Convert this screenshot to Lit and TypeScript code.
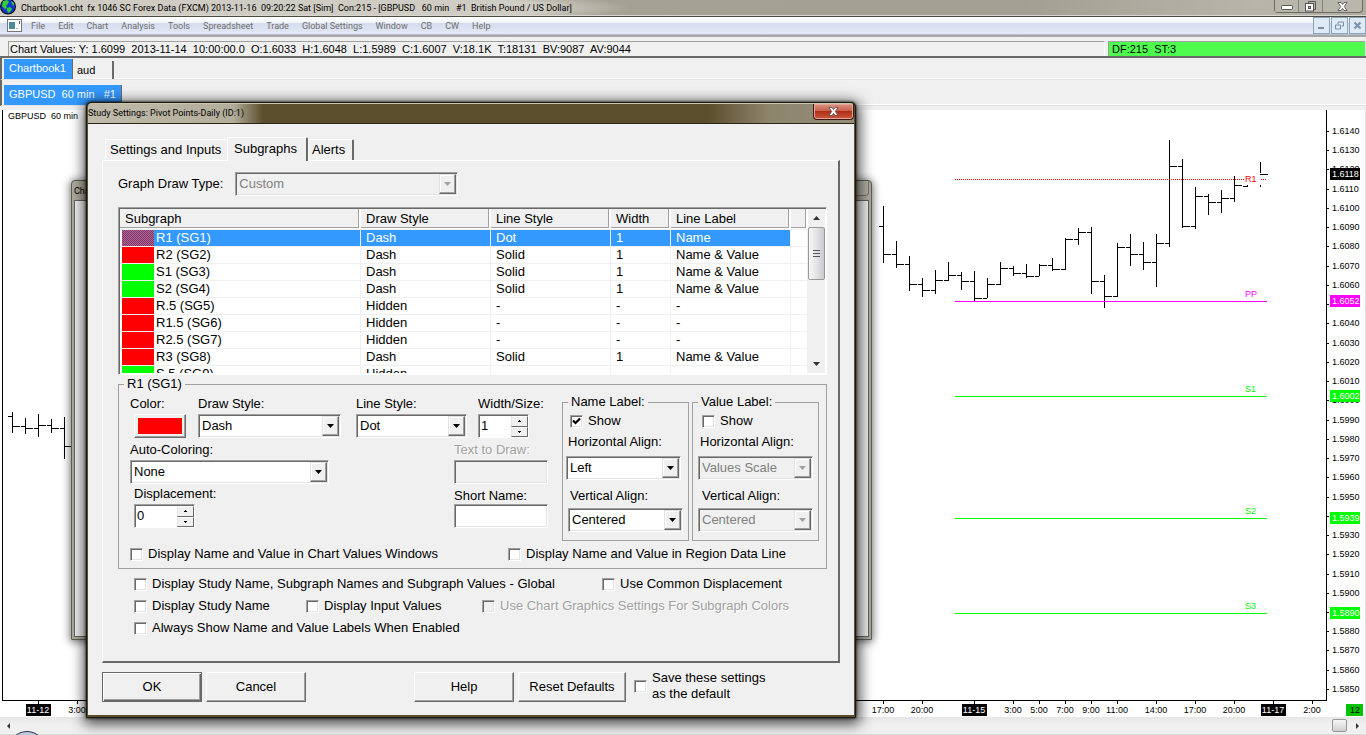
import { LitElement, html, svg, css } from "lit";
import { customElement } from "lit/decorators.js";
import { classMap } from "lit/directives/class-map.js";

const MENUS = ["File", "Edit", "Chart", "Analysis", "Tools", "Spreadsheet", "Trade", "Global Settings", "Window", "CB", "CW", "Help"];

type Bar = [x: number, high: number, low: number, open: number | null, close: number | null];

const EARLY_BARS: Bar[] = [
  [12, 412, 433, 416, 426], [25, 418, 434, 426, 428], [38, 414, 437, 428, 425],
  [51, 419, 433, 425, 428], [64, 417, 459, 428, 446],
];

const LATE_BARS: Bar[] = ([
  [206, 263, 254], [241, 268, 264], [256, 291, 284], [278, 297, 290], [270, 294, 280],
  [262, 281, 275], [272, 290, 281], [271, 301, 298], [278, 298, 284], [262, 285, 268],
  [266, 276, 273], [264, 278, 276], [264, 276, 265], [258, 271, 269], [238, 270, 239],
  [228, 245, 232], [227, 294, 281], [275, 308, 296], [243, 297, 247], [234, 266, 254],
  [242, 270, 262], [234, 287, 243], [140, 247, 166], [159, 228, 226], [187, 229, 196],
  [194, 215, 202], [190, 213, 198], [176, 202, 185],
] as number[][]).map((b, i, all) => [883 + 13 * i, b[0], b[1], i ? all[i - 1][2] : 226, b[2]] as Bar);

const LAST_BARS: Bar[] = [
  [1247, 185, 187, 186, null], [1260, 162, 173, null, 174], [1260, 185, 187, null, null],
];

const LEVELS = [
  { name: "PP", y: 301, color: "#f0f" },
  { name: "S1", y: 396, color: "#0f0" },
  { name: "S2", y: 518, color: "#0f0" },
  { name: "S3", y: 613, color: "#0f0" },
];

const PRICE_TAGS = [
  { text: "1.6118", y: 174, color: "#000" },
  { text: "1.6052", y: 301, color: "#f0f" },
  { text: "1.6002", y: 396, color: "#0f0" },
  { text: "1.5939", y: 518, color: "#0f0" },
  { text: "1.5890", y: 613, color: "#0f0" },
];

/* Scale labels that a price tag covers completely. */
const COVERED = ["1.5940", "1.5890"];

const TIMES: [number, string, boolean?][] = [
  [38, "11-12", true], [77, "3:00"], [883, "17:00"], [922, "20:00"], [974, "11-15", true],
  [1013, "3:00"], [1039, "5:00"], [1065, "7:00"], [1091, "9:00"], [1117, "11:00"],
  [1156, "14:00"], [1195, "17:00"], [1234, "20:00"], [1273, "11-17", true], [1312, "2:00"],
];

const ROWS = [
  ["R1 (SG1)", "red", "Dash", "Dot", "1", "Name"],
  ["R2 (SG2)", "red", "Dash", "Solid", "1", "Name & Value"],
  ["S1 (SG3)", "green", "Dash", "Solid", "1", "Name & Value"],
  ["S2 (SG4)", "green", "Dash", "Solid", "1", "Name & Value"],
  ["R.5 (SG5)", "red", "Hidden", "-", "-", "-"],
  ["R1.5 (SG6)", "red", "Hidden", "-", "-", "-"],
  ["R2.5 (SG7)", "red", "Hidden", "-", "-", "-"],
  ["R3 (SG8)", "red", "Dash", "Solid", "1", "Name & Value"],
  ["S.5 (SG9)", "green", "Hidden", "-", "-", "-"],
];

@customElement("price-chart")
export class PriceChart extends LitElement {
  static styles = css`
    :host { display: flex; min-height: 0; background: #fff; font: 9px "Liberation Sans", Arial, sans-serif; }
    .plot { flex: 1; min-width: 0; height: 100%; display: block; overflow: hidden; }
    .axis { flex: none; width: 39px; height: 100%; display: block; border-right: 1px solid #e3e3e3; }
    .ink { stroke: #000; stroke-width: 1; shape-rendering: crispEdges; }
    .mid { text-anchor: middle; }
    .inverse { fill: #fff; }
  `;

  private bar([x, high, low, open, close]: Bar) {
    return svg`
      <line class="ink" x1=${x + 0.5} x2=${x + 0.5} y1=${high} y2=${low}></line>
      ${open === null ? null : svg`<line class="ink" x1=${x - 4} x2=${x} y1=${open + 0.5} y2=${open + 0.5}></line>`}
      ${close === null ? null : svg`<line class="ink" x1=${x} x2=${x + 8} y1=${close + 0.5} y2=${close + 0.5}></line>`}`;
  }

  render() {
    const prices = Array.from({ length: 30 }, (_, i) => ({
      text: (1.614 - i * 0.001).toFixed(4),
      y: Math.round(131 + i * 19.24),
    }));
    return html`
      <svg class="plot" role="img" aria-label="GBPUSD 60 min">
        <g transform="translate(0,-110)">
          <line class="ink" x1="2.5" x2="2.5" y1="110" y2="700"></line>
          <line class="ink" x1="2" x2="3000" y1="700.5" y2="700.5"></line>
          <text x="8" y="119" xml:space="preserve">GBPUSD  60 min</text>
          ${EARLY_BARS.map((b) => this.bar(b))}
          ${LATE_BARS.map((b) => this.bar(b))}
          ${LAST_BARS.map((b) => this.bar(b))}
          <line x1="955" x2="1244" y1="179.5" y2="179.5" stroke="red" stroke-dasharray="1 1"></line>
          <line x1="1261" x2="1267" y1="179.5" y2="179.5" stroke="red" stroke-dasharray="1 1"></line>
          <text x="1245" y="182" fill="red">R1</text>
          ${LEVELS.map((l) => svg`
            <line x1="955" x2="1267" y1=${l.y + 0.5} y2=${l.y + 0.5} stroke=${l.color}></line>
            <text x="1245" y=${l.y - 4} fill=${l.color}>${l.name}</text>`)}
          ${TIMES.map(([x, t, tag]) => svg`
            <line class="ink" x1=${x + 0.5} x2=${x + 0.5} y1="700" y2="704"></line>
            ${tag ? svg`<rect x=${x - 12} y="704" width="25" height="12"></rect>` : null}
            <text class=${tag ? "mid inverse" : "mid"} x=${x} y="713">${t}</text>`)}
        </g>
      </svg>
      <svg class="axis" aria-label="Price scale" role="img">
        <g transform="translate(-1326,-110)">
          <line class="ink" x1="1326.5" x2="1326.5" y1="110" y2="701"></line>
          ${prices.map((p) => svg`
            <line class="ink" x1="1327" x2="1329" y1=${p.y + 0.5} y2=${p.y + 0.5}></line>
            ${COVERED.includes(p.text) ? null : svg`<text x="1332" y=${p.y + 3}>${p.text}</text>`}`)}
          ${PRICE_TAGS.map((p) => svg`
            <rect x="1330" y=${p.y - 6} width="30" height="12" fill=${p.color}></rect>
            <text class="inverse" x="1332" y=${p.y + 3}>${p.text}</text>`)}
          <rect x="1346" y="704" width="17" height="12" fill="#00c400"></rect>
          <text class="mid" x="1355" y="713">12</text>
        </g>
      </svg>`;
  }
}

@customElement("study-dialog")
export class StudyDialog extends LitElement {
  static styles = css`
    :host { display: block; font: 13px/16px "Liberation Sans", Arial, sans-serif; color: #000; }
    * { box-sizing: border-box; }
    button, input, select { font: inherit; color: inherit; margin: 0; border-radius: 0; outline: 0; }
    .frame { border: 1px solid #1c1a14; border-radius: 5px 5px 1px 1px; background: #5b4e2d; padding: 0 1px 2px; box-shadow: 0 0 3px #000, 1px 3px 14px 3px rgba(0, 0, 0, .7); }
    .title { height: 20px; display: flex; justify-content: space-between; align-items: flex-start; border-top: 1px solid #c9c2ad; border-radius: 4px 4px 0 0; background: linear-gradient(90deg, #bfbaa9 0, #b3ad9b 145px, #5b4e2d 175px, #5b4e2d 620px, #8d846c 680px, #958d7a); font: 9px/18px Roboto, sans-serif; }
    .title h1 { font: inherit; margin: 0; }
    .close { width: 41px; height: 16px; padding: 0; border: 1px solid #3d1712; border-top: 0; border-radius: 0 0 4px 4px; background: linear-gradient(#d99684, #c9614c 45%, #b32c16 50%, #c85a3f); box-shadow: inset 0 0 0 1px #e3a595; display: grid; place-items: center; }
    .client { background: #f0f0f0; border-top: 1px solid #2b2516; padding: 12px 14px 13px; }

    .tabs { display: flex; align-items: flex-end; height: 24px; padding-left: 3px; }
    .tab { border: 0; background: none; border-left: 1px solid #fff; border-top: 1px solid #fff; border-right: 1px solid #696969; border-radius: 2px 2px 0 0; height: 21px; padding: 0 4px; white-space: nowrap; text-align: left; }
    .wide { width: 122px; border-right: 0; }
    .active { width: 81px; height: 24px; padding: 0 6px 2px; border-right-width: 2px; background: #f0f0f0; position: relative; top: 1px; }
    .last { width: 46px; border-right-width: 2px; padding: 0 3px; }

    .panel { border: 1px solid #fff; border-right: 2px solid #696969; border-bottom: 2px solid #696969; height: 503px; padding: 11px 11px 0 15px; }
    .line { display: flex; }
    .mode { align-items: center; gap: 12px; }

    .sel { display: grid; height: 24px; border: 1px solid; border-color: #a0a0a0 #fff #fff #a0a0a0; box-shadow: inset 1px 1px #696969, inset -1px -1px #e3e3e3; background: #fff; padding: 1px; }
    .sel select, .sel .arrow { grid-area: 1 / 1; }
    .sel select { appearance: none; border: 0; background: none; padding: 0 0 0 2px; width: 100%; height: 20px; }
    .arrow { justify-self: end; width: 17px; height: 20px; pointer-events: none; background: #f0f0f0; border: 1px solid; border-color: #e3e3e3 #696969 #696969 #e3e3e3; box-shadow: inset -1px -1px #a0a0a0, inset 1px 1px #fff; display: grid; place-items: center; }
    .dim { background: #f0f0f0; color: #808080; }
    .dim select { color: #808080; opacity: 1; }
    .w222 { width: 223px; } .w142 { width: 143px; } .w110 { width: 111px; } .w199 { width: 199px; } .w114 { width: 115px; }

    .list { margin-top: 11px; height: 168px; display: flex; border: 1px solid; border-color: #a0a0a0 #fff #fff #a0a0a0; box-shadow: inset 1px 1px #696969; background: #fff; padding: 1px 1px 1px 1px; }
    .rows { flex: 1; overflow: hidden; min-width: 0; }
    table { border-collapse: separate; border-spacing: 0; table-layout: fixed; width: 100%; }
    th { padding: 0 2px 1px 0; text-align: left; font-weight: normal; border-bottom: 1px solid #f0f0f0; }
    .head { height: 19px; border-right: 1px solid #a0a0a0; border-bottom: 1px solid #a0a0a0; background: #f0f0f0; padding: 2px 0 0 5px; white-space: nowrap; }
    td { height: 17px; padding: 0 0 0 5px; line-height: 16px; border-right: 1px solid #f0f0f0; border-bottom: 1px solid #f0f0f0; white-space: nowrap; }
    td.name { padding: 0 0 0 2px; }
    .named { display: flex; gap: 2px; height: 16px; }
    .swatch { width: 32px; height: 16px; }
    .red { background: #f00; } .green { background: #0f0; }
    .picked td { background: #39f; color: #fff; }
    .picked td.name { background: linear-gradient(90deg, #fff 2px, #39f 2px); }
    .picked td.rest { background: #fff; }
    .picked .swatch { background: url('data:image/svg+xml,<svg xmlns="http://www.w3.org/2000/svg" width="2" height="2" shape-rendering="crispEdges"><rect width="2" height="2" fill="rgb(51,153,255)"/><rect width="1" height="1" fill="red"/><rect x="1" y="1" width="1" height="1" fill="red"/></svg>') 0 0 / 2px 2px; }
    .bar { width: 17px; background: #f0f0f0; display: flex; flex-direction: column; align-items: stretch; }
    .bar > svg { height: 18px; width: 17px; flex: none; }
    .thumb { height: 53px; border: 1px solid #979797; border-radius: 2px; background: linear-gradient(90deg, #f6f6f6, #e6e6e8 45%, #c9cacf); display: grid; place-items: center; }
    .grow { flex: 1; }

    fieldset { border: 1px solid #a0a0a0; margin: 0; padding: 0; min-width: 0; }
    legend { padding: 0 3px; margin-left: 5px; line-height: 16px; }
    .detail { margin-top: 1px; }
    .detail .body { display: flex; padding: 0 7px 0 11px; justify-content: space-between; }
    .r1 { display: grid; grid-template-columns: 68px 158px 122px 76px; height: 46px; }
    .r2 { display: grid; grid-template-columns: 324px 94px; height: 46px; }
    .r3 { height: 44px; }
    .cell { display: flex; flex-direction: column; justify-content: flex-end; align-items: flex-start; gap: 2px; white-space: nowrap; }
    .inset { padding-left: 4px; }
    .tight { gap: 0; }
    .off { color: #a0a0a0; text-shadow: 1px 1px #fff; }
    .chip { display: block; width: 44px; height: 16px; background: #f00; }
    .text { width: 94px; height: 24px; border: 1px solid; border-color: #a0a0a0 #fff #fff #a0a0a0; box-shadow: inset 1px 1px #696969, inset -1px -1px #e3e3e3; background: #fff; padding: 2px; }
    .text:disabled { background: #f0f0f0; }
    .spin { display: flex; width: 51px; height: 24px; border: 1px solid; border-color: #a0a0a0 #fff #fff #a0a0a0; box-shadow: inset 1px 1px #696969; background: #fff; padding: 1px 0 0 1px; }
    .s60 { width: 61px; }
    .spin input { border: 0; background: none; width: 0; flex: 1; padding: 0 2px 2px 1px; }
    .steps { display: grid; width: 17px; grid-template-rows: 1fr 1fr; }
    .steps button { padding: 0; border: 1px solid; border-color: #fff #696969 #696969 #e3e3e3; background: #f0f0f0; display: grid; place-items: center; }
    .groups { display: flex; gap: 3px; padding-top: 2px; }
    .groups fieldset { width: 127px; height: 147px; }
    .stack { display: flex; flex-direction: column; align-items: flex-start; padding: 3px 0 0 3px; }
    .stack .check { margin-left: 4px; }
    .lab { margin: 5px 0 6px 2px; }
    .lab2 { margin: 8px 0 4px 4px; }
    .nudge { margin-left: 2px; }
    .value { padding-left: 5px; }

    .check { display: flex; align-items: center; gap: 5px; white-space: nowrap; height: 16px; }
    .check input { appearance: none; width: 13px; height: 13px; background: #fff; border: 1px solid; border-color: #a0a0a0 #fff #fff #a0a0a0; box-shadow: inset 1px 1px #696969, inset -1px -1px #e3e3e3; flex: none; }
    .check input:checked { background: #fff url('data:image/svg+xml,<svg xmlns="http://www.w3.org/2000/svg" width="11" height="11"><path d="M2 4.500l2.500 2.500l4.500-4.500" fill="none" stroke="black" stroke-width="2.200"/></svg>') center no-repeat; }
    .check input:disabled { background: #f0f0f0; }
    .foot { padding: 5px 0 6px 11px; }
    .c378 { width: 378px; } .c468 { width: 468px; } .c172 { width: 172px; } .c176 { width: 176px; }
    .globals { display: grid; gap: 6px; padding: 7px 0 0 16px; }

    .actions { display: flex; align-items: flex-start; gap: 4px; padding-top: 9px; }
    .btn { height: 30px; width: 100px; background: #f0f0f0; border: 1px solid; border-color: #fff #696969 #696969 #fff; box-shadow: inset -1px -1px #a0a0a0; padding: 0; }
    .color { width: 52px; height: 24px; padding: 3px; display: block; }
    .reset { width: 108px; }
    .primary { border-color: #696969; box-shadow: inset 1px 1px #fff, inset -1px -1px #696969, inset -2px -2px #a0a0a0; }
    .gap { width: 100px; }
    .save { height: 32px; margin: -2px 0 0 4px; }
  `;

  private arrow(off = false) {
    return html`<span class="arrow"><svg width="7" height="4"><path d="M0 0h7l-3.500 4z" fill=${off ? "#a0a0a0" : "#000"}></path></svg></span>`;
  }
  private pick(id: string, value: string, width: string, off = false) {
    return html`<span class=${classMap({ sel: true, [width]: true, dim: off })}>
      <select id=${id} ?disabled=${off}><option>${value}</option></select>${this.arrow(off)}</span>`;
  }
  private check(text: string, extra = "", on = false, off = false) {
    return html`<label class="check ${extra} ${off ? "off" : ""}"><input type="checkbox" .checked=${on} ?disabled=${off}>${text}</label>`;
  }
  private spin(id: string, value: string, extra = "") {
    return html`<span class="spin ${extra}"><input id=${id} type="text" .value=${value}>
      <span class="steps">
        <button aria-label="Increase"><svg width="3" height="2"><path d="M1 0h1v1h1v1H0V1h1z"></path></svg></button>
        <button aria-label="Decrease"><svg width="3" height="2"><path d="M0 0h3v1H2v1H1V1H0z"></path></svg></button>
      </span></span>`;
  }
  private labelGroup(key: string, title: string, align: string, on: boolean) {
    return html`<fieldset><legend>${title}</legend>
      <div class="stack ${on ? "" : "value"}">
        ${this.check("Show", "", on)}
        <label class="lab" for="${key}-h">Horizontal Align:</label>
        ${this.pick(`${key}-h`, align, "w114", !on)}
        <label class="lab2" for="${key}-v">Vertical Align:</label>
        <span class=${on ? "nudge" : ""}>${this.pick(`${key}-v`, "Centered", "w114", !on)}</span>
      </div></fieldset>`;
  }

  render() {
    return html`<section class="frame" role="dialog" aria-labelledby="title">
      <div class="title"><h1 id="title">Study Settings: Pivot Points-Daily (ID:1)</h1>
        <button class="close" aria-label="Close"><svg width="11" height="9"><path d="M1 .5h3L5.500 2.500 7 .5h3L7.300 4.500 10 8.500H7L5.500 6.500 4 8.500H1L3.700 4.500z" fill="#fff" stroke="#5c4848" stroke-width=".8"></path></svg></button>
      </div>
      <div class="client">
        <div class="tabs" role="tablist">
          <button class="tab wide" role="tab">Settings and Inputs</button>
          <button class="tab active" role="tab" aria-selected="true">Subgraphs</button>
          <button class="tab last" role="tab">Alerts</button>
        </div>
        <div class="panel">
          <div class="line mode"><label for="type">Graph Draw Type:</label>${this.pick("type", "Custom", "w222", true)}</div>
          <div class="list">
            <div class="rows"><table>
              <colgroup><col width="241"><col width="130"><col width="120"><col width="60"><col width="120"><col></colgroup>
              <thead><tr>${["Subgraph", "Draw Style", "Line Style", "Width", "Line Label", ""].map((h) => html`<th scope="col"><div class="head">${h}</div></th>`)}</tr></thead>
              <tbody>${ROWS.map((r, i) => html`<tr class=${i ? "" : "picked"}>
                <td class="name"><div class="named"><span class="swatch ${r[1]}"></span>${r[0]}</div></td>
                ${r.slice(2).map((c) => html`<td>${c}</td>`)}<td class="rest"></td></tr>`)}</tbody>
            </table></div>
            <div class="bar">
              <svg><path d="M5 11h7L8.500 7z" fill="#333"></path></svg>
              <div class="thumb"><svg width="9" height="9" viewBox="0 0 9 9"><path d="M1 1.500h7M1 4.500h7M1 7.500h7" stroke="#555"></path></svg></div>
              <div class="grow"></div>
              <svg><path d="M5 7h7L8.500 11z" fill="#333"></path></svg>
            </div>
          </div>

          <fieldset class="detail"><legend>R1 (SG1)</legend>
            <div class="body">
              <div>
                <div class="r1">
                  <div class="cell"><label for="color">Color:</label><span class="inset"><button id="color" class="btn color"><span class="chip"></span></button></span></div>
                  <div class="cell"><label for="draw">Draw Style:</label>${this.pick("draw", "Dash", "w142")}</div>
                  <div class="cell"><label for="line">Line Style:</label>${this.pick("line", "Dot", "w110")}</div>
                  <div class="cell"><label for="size">Width/Size:</label>${this.spin("size", "1")}</div>
                </div>
                <div class="r2">
                  <div class="cell"><label for="auto">Auto-Coloring:</label>${this.pick("auto", "None", "w199")}</div>
                  <div class="cell"><label class="off" for="txt">Text to Draw:</label><input id="txt" class="text" type="text" disabled></div>
                </div>
                <div class="r2 r3">
                  <div class="cell inset"><label for="disp">Displacement:</label>${this.spin("disp", "0", "s60")}</div>
                  <div class="cell tight"><label for="short">Short Name:</label><input id="short" class="text" type="text"></div>
                </div>
              </div>
              <div class="groups">
                ${this.labelGroup("name", "Name Label:", "Left", true)}
                ${this.labelGroup("value", "Value Label:", "Values Scale", false)}
              </div>
            </div>
            <div class="line foot">
              ${this.check("Display Name and Value in Chart Values Windows", "c378")}
              ${this.check("Display Name and Value in Region Data Line")}
            </div>
          </fieldset>
          <div class="globals">
            <div class="line">${this.check("Display Study Name, Subgraph Names and Subgraph Values - Global", "c468")}${this.check("Use Common Displacement")}</div>
            <div class="line">${this.check("Display Study Name", "c172")}${this.check("Display Input Values", "c176")}${this.check("Use Chart Graphics Settings For Subgraph Colors", "", false, true)}</div>
            <div class="line">${this.check("Always Show Name and Value Labels When Enabled")}</div>
          </div>
        </div>
        <div class="actions">
          <button class="btn primary">OK</button>
          <button class="btn">Cancel</button>
          <span class="gap"></span>
          <button class="btn">Help</button>
          <button class="btn reset">Reset Defaults</button>
          <label class="check save"><input type="checkbox"><span>Save these settings<br>as the default</span></label>
        </div>
      </div>
    </section>`;
  }
}

@customElement("app-root")
export class AppRoot extends LitElement {
  static styles = css`
    :host { display: flex; flex-direction: column; position: relative; height: 100vh; overflow: hidden; background: #f0f0f0; color: #000; font: 11px/14px "Liberation Sans", Arial, sans-serif; }
    * { box-sizing: border-box; }
    button { font: inherit; color: inherit; padding: 0; border-radius: 0; }
    .pre { white-space: pre; }
    .title { height: 17px; flex: none; display: flex; align-items: center; gap: 5px; background: radial-gradient(ellipse 430px 22px at 200px 8px, #cfccc3 80%, transparent), linear-gradient(90deg, #a8a495, #a39f92 75%, #b8b5ab 92%, #aeaba0); border-bottom: 1px solid #4c4a45; box-shadow: inset 0 -1px #d8d6d0; font: 9px/15px Roboto, sans-serif; }
    .name { flex: 1; }
    .wins { display: flex; align-self: flex-start; height: 13px; margin-right: 3px; border: 1px solid #6d6b64; border-top: 0; border-radius: 0 0 4px 4px; }
    .wins button { border: 0; background: #b9b6ac; width: 24px; display: grid; place-items: center; border-right: 1px solid #85837b; }
    .wins button:last-child { width: 39px; border-right: 0; border-radius: 0 0 4px 0; }
    .menu { height: 18px; flex: none; display: flex; align-items: center; background: linear-gradient(#fff, #f2f4fa 35%, #d5dcee 36%, #e3e8f6); border-bottom: 1px solid #b6bccc; font: 9px/18px Roboto, sans-serif; color: #6d6d6d; padding-left: 7px; gap: 9px; }
    .items { display: flex; gap: 13px; }
    .menu a { color: inherit; text-decoration: none; }
    .docs { display: flex; gap: 1px; margin-left: auto; }
    .docs button { width: 17px; height: 17px; border: 1px solid #8ea3b8; background: #deeaf6; display: grid; place-items: center; }
    .status { flex: none; height: 23px; display: flex; gap: 3px; padding: 4px 1px 2px 8px; border-top: 2px solid #a8a8a8; border-bottom: 2px solid #696969; }
    .box { border-top: 1px solid #a0a0a0; border-left: 1px solid #a0a0a0; padding-left: 1px; line-height: 14px; height: 15px; }
    .values { flex: 1; border-right: 1px solid #fff; }
    .ok { width: 257px; background: #4dfc4d; padding-left: 3px; }
    .tabs { flex: none; display: flex; align-items: flex-start; border-left: 2px solid #696969; padding-left: 2px; border-bottom: 1px solid #e3e3e3; box-shadow: inset 0 -1px #fff; }
    .books { height: 22px; padding-top: 1px; }
    .sheets { height: 26px; padding-top: 5px; }
    .tab { border: 0; border-right: 1px solid #696969; background: none; height: 18px; text-align: left; padding-left: 5px; font-size: 11px; }
    .on { background: #39f; color: #fff; height: 20px; padding-bottom: 3px; }
    .w69 { width: 69px; } .w40 { width: 41px; margin-top: 2px; padding-left: 4px; border-right-width: 2px; } .w117 { width: 118px; }
    .spacer { flex: none; height: 4px; }
    .chart { flex: 1; }
    .scroll { flex: none; height: 18px; display: flex; align-items: center; padding: 0 5px; background: linear-gradient(#e6e6e6, #f0f0f0 40%, #f0f0f0); border-bottom: 1px solid #dcdcdc; }
    .scroll .thumb { margin-left: auto; margin-right: 7px; width: 15px; height: 13px; border: 1px solid #979797; border-radius: 2px; background: linear-gradient(#f6f6f6, #d0d0d4); }
    .orb { position: absolute; left: 8px; bottom: -34px; width: 38px; height: 38px; border-radius: 50%; border: 1px solid #335; background: #bcd; }
    .back { position: absolute; left: 71px; top: 180px; width: 801px; height: 460px; border: 1px solid #5f5d57; border-radius: 4px 4px 1px 1px; background: #aeaa9e; padding: 0 2px 2px; box-shadow: 0 1px 8px 1px rgba(0, 0, 0, .55); display: flex; flex-direction: column; }
    .cap { height: 19px; display: flex; justify-content: space-between; align-items: center; font: 9px/18px Roboto, sans-serif; }
    .cap button { align-self: flex-start; width: 40px; height: 15px; border: 1px solid #77756c; border-top: 0; border-radius: 0 0 4px 4px; background: #b5b2a7; }
    .pane { flex: 1; border: 1px solid #66645e; background: #f0f0f0; }
    .dialog { position: absolute; left: 86px; top: 102px; width: 770px; }
  `;

  render() {
    return html`
      <header class="title">
        <svg width="16" height="16" viewBox="0 0 16 16"><circle cx="8" cy="6.500" r="8" fill="#000"></circle><circle cx="8" cy="6.500" r="7" fill="#1437d2"></circle><path d="M3 1l4-1 2 2-2 3-1 1 1 2-2 1-3-3zM7 8l3-1 2 2-2 3-2 1-1-3zM11 1l3 2v3l-2-2z" fill="#2fd12f"></path></svg>
        <span class="name pre">Chartbook1.cht  fx 1046 SC Forex Data (FXCM) 2013-11-16  09:20:22 Sat [Sim]  Con:215 - [GBPUSD   60 min   #1  British Pound / US Dollar]</span>
        <div class="wins">
          <button aria-label="Minimize"><svg width="12" height="10"><rect x=".5" y="4.500" width="11" height="4" rx="1" fill="#fff" stroke="#555"></rect></svg></button>
          <button aria-label="Restore"><svg width="11" height="11"><path d="M3.500 2.500v-2h7v8h-2" fill="none" stroke="#555"></path><rect x=".5" y="2.500" width="8" height="7.500" fill="#fff" stroke="#555"></rect><rect x="3.500" y="5.500" width="2" height="2" fill="#bbb" stroke="#555"></rect></svg></button>
          <button aria-label="Close"><svg width="11" height="9"><path d="M1 .5h3L5.500 2.500 7 .5h3L7.300 4.500 10 8.500H7L5.500 6.500 4 8.500H1L3.700 4.500z" fill="#fff" stroke="#555" stroke-width=".9"></path></svg></button>
        </div>
      </header>
      <nav class="menu">
        <svg width="15" height="13"><rect x=".5" y=".5" width="14" height="12" fill="#fff" stroke="#777"></rect><rect x="2" y="3" width="6" height="7" fill="#4a8a9a"></rect><path d="M9.500 9.500h1M12.500 2v3" stroke="#556"></path></svg>
        <div class="items">${MENUS.map((m) => html`<a href="#">${m}</a>`)}</div>
        <div class="docs">
          <button aria-label="Minimize chart"><svg width="9" height="9"><path d="M1 7h6" stroke="#7b90a5" stroke-width="2"></path></svg></button>
          <button aria-label="Restore chart"><svg width="9" height="9"><path d="M3 3V1h5.500v4H6.500M.5 4h5v4h-5z" fill="none" stroke="#7b90a5"></path></svg></button>
          <button aria-label="Close chart"><svg width="9" height="9"><path d="M1.500 1.500l6 6m0-6l-6 6" stroke="#7b90a5" stroke-width="2"></path></svg></button>
        </div>
      </nav>
      <div class="status">
        <div class="box values pre">Chart Values: Y: 1.6099  2013-11-14  10:00:00.0  O:1.6033  H:1.6048  L:1.5989  C:1.6007  V:18.1K  T:18131  BV:9087  AV:9044</div>
        <div class="box ok pre">DF:215  ST:3</div>
      </div>
      <div class="tabs books"><button class="tab on w69">Chartbook1</button><button class="tab w40">aud</button></div>
      <div class="tabs sheets"><button class="tab on w117 pre">GBPUSD  60 min   #1</button></div>
      <div class="spacer"></div>
      <price-chart class="chart"></price-chart>
      <div class="scroll">
        <svg width="7" height="8"><path d="M5 1v6L2 4z" fill="#333"></path></svg>
        <span class="thumb"></span>
        <svg width="7" height="8"><path d="M2 1v6l3-3z" fill="#333"></path></svg>
      </div>
      <div class="orb"></div>
      <section class="back" aria-label="Chart Studies">
        <div class="cap"><span>Chart Studies</span><button aria-label="Close studies"></button></div>
        <div class="pane"></div>
      </section>
      <study-dialog class="dialog"></study-dialog>`;
  }
}
